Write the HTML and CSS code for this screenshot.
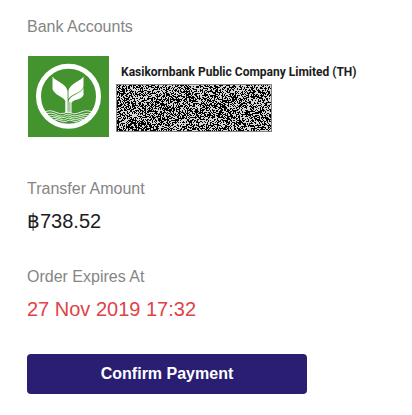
FILE: index.html
```html
<!DOCTYPE html>
<html lang="en">
<head>
<meta charset="utf-8">
<meta name="viewport" content="width=device-width, initial-scale=1">
<title>Confirm Payment</title>
<link rel="stylesheet" href="styles.css">
</head>
<body>
<main class="payment">
  <section class="group">
    <h2 class="label">Bank Accounts</h2>
    <div class="account">
      <svg class="logo" viewBox="0 0 81 81" role="img" aria-label="Kasikornbank">
        <rect width="81" height="81" fill="#43932f"/>
        <circle cx="40.5" cy="40.3" r="30" fill="none" stroke="#fff" stroke-width="5"/>
        <path fill="#fff" d="M24.500 20.500C27 25 39.600 28 39.600 36V57H37.300V45C36 41 26 39 24.500 33Z"/>
        <path fill="#fff" d="M55.500 20.500C53 25 40.500 28 40.500 36V43C43 38 54 37 55.500 30.500Z"/>
        <path fill="#fff" d="M55.500 32C53 38 41 39 40.500 46V57H41.500V46H42.300V57H43.500V47C45 43 54 44 55.500 39Z"/>
        <g fill="none" stroke="#fff" stroke-width="1" opacity=".85">
          <path d="M15 57Q21 53 27 56T37 57Q40 55 43 57T53 56T66 57"/>
          <path d="M16 59Q22 55.500 28 58.500T37 59Q40 57 43 59T53 58.500T65 59"/>
          <path d="M18 61Q24 58 29 60.500T38 61Q40 59 43 61T52 60.500T63 61"/>
          <path d="M20 63Q26 60 31 62.500T38 63Q41 61 44 63T52 62.500T61 63"/>
          <path d="M24 65Q28 62 32 64.500T39 65Q42 63 45 65T51 64.500T58 65"/>
        </g>
      </svg>
      <div class="details">
        <p class="bank">Kasikornbank Public Company Limited (TH)</p>
        <canvas class="redacted" width="154" height="46" aria-hidden="true"></canvas>
      </div>
    </div>
  </section>
  <section class="group">
    <h2 class="label">Transfer Amount</h2>
    <p class="value">฿738.52</p>
  </section>
  <section class="group">
    <h2 class="label">Order Expires At</h2>
    <p class="value expires"><time datetime="2019-11-27T17:32">27 Nov 2019 17:32</time></p>
  </section>
  <button class="confirm" type="button">Confirm Payment</button>
</main>
<script src="noise.js"></script>
</body>
</html>
```
FILE: styles.css
```css
* {
  box-sizing: border-box;
}

body {
  margin: 0;
  background: #fff;
  color: #1c1c1c;
  font-family: "Liberation Sans", Arial, sans-serif;
}

h2,
p {
  margin: 0;
}

.payment {
  display: flex;
  flex-direction: column;
  align-items: flex-start;
  gap: 32px;
  padding: 16px 27px 20px;
}

.label {
  font-size: 16px;
  font-weight: 400;
  line-height: 22px;
  color: #858585;
}

.value {
  margin-top: 8px;
  font-size: 20px;
  line-height: 26px;
}

.expires {
  color: #de4347;
}

.account {
  display: flex;
  gap: 7px;
  margin: 18px 1px 9px;
}

.logo {
  flex: none;
  width: 81px;
  height: 81px;
}

.details {
  padding-top: 8px;
}

.bank {
  padding-left: 5px;
  font-family: Roboto, sans-serif;
  font-size: 12px;
  font-weight: 700;
  line-height: 16px;
  white-space: nowrap;
}

.redacted {
  display: block;
  margin-top: 4px;
  border: 1px solid #808080;
}

.confirm {
  width: 100%;
  max-width: 280px;
  padding: 10px 16px;
  border: 0;
  border-radius: 4px;
  background: #2a1e73;
  color: #fff;
  font: 700 16px/20px "Liberation Sans", Arial, sans-serif;
  cursor: pointer;
}
```
FILE: noise.js
```js
// Fills the hidden account details with a repeatable black and grey grain.
const canvas = document.querySelector(".redacted");
const ctx = canvas.getContext("2d");
let seed = 738521;
ctx.fillStyle = "#d6d6d6";
ctx.fillRect(0, 0, canvas.width, canvas.height);
ctx.fillStyle = "#000";
for (let y = 0; y < canvas.height; y++) {
  for (let x = 0; x < canvas.width; x++) {
    seed = (Math.imul(seed, 1664525) + 1013904223) >>> 0;
    if (seed / 4294967296 < 0.5) ctx.fillRect(x, y, 1, 1);
  }
}
```
